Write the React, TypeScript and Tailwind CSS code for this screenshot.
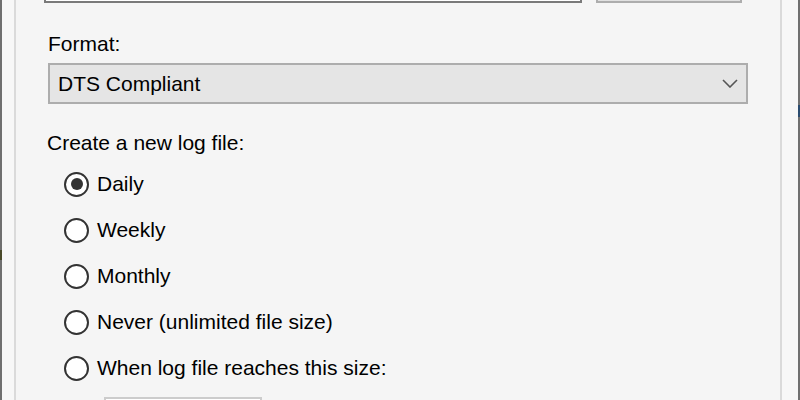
import React from "react";

const options = [
  "Daily",
  "Weekly",
  "Monthly",
  "Never (unlimited file size)",
  "When log file reaches this size:",
];

const Radio: React.FC<{ label: string; checked?: boolean }> = ({ label, checked }) => {
  return (
    <div className="flex shrink-0 items-center h-[46px] pl-[48px]">
      <span className="flex shrink-0 items-center justify-center w-[25px] h-[25px] rounded-full border-2 border-[#333333] bg-white">
        {checked && <span className="w-[12px] h-[12px] rounded-full bg-[#333333]" />}
      </span>
      <span className="ml-[8px]">{label}</span>
    </div>
  );
};

export default function App() {
  return (
    <div
      className="flex w-[800px] h-[400px] overflow-hidden bg-[#f7f7f7] text-black text-[21px] leading-[24px]"
      style={{ fontFamily: '"Liberation Sans", Arial, sans-serif' }}
    >
      {/* left window edge */}
      <div className="flex flex-col w-[2px] h-full bg-[#707070]">
        <div className="h-[250px]" />
        <div className="h-[10px] bg-[#4a4a2a]" />
      </div>
      <div className="w-[12px] h-full bg-[#f7f7f7]" />
      <div className="w-[2px] h-full bg-[#dadada]" />

      {/* dialog content */}
      <div className="flex-1 flex flex-col bg-[#f5f5f5]">
        <div className="flex shrink-0 h-[3px]">
          <div className="ml-[28px] w-[538px] h-[3px] border-x-2 border-b-2 border-[#7a7a7a] bg-white" />
          <div className="ml-[14px] w-[146px] h-[3px] border-x-2 border-b-2 border-[#adadad] bg-[#e1e1e1]" />
        </div>

        <div className="shrink-0 mt-[29px] pl-[32px]">Format:</div>

        <div className="shrink-0 mt-[7px] ml-[32px] w-[700px] h-[41px] flex items-center justify-between border-2 border-[#adadad] bg-[#e5e5e5] pl-[8px] pr-[8px]">
          <span>DTS Compliant</span>
          <svg width="16" height="9" viewBox="0 0 16 9" fill="none">
            <path d="M1 1 L8 8 L15 1" stroke="#555555" strokeWidth="1.6" />
          </svg>
        </div>

        <div className="shrink-0 mt-[27px] pl-[31px]">Create a new log file:</div>

        <div className="shrink-0 mt-[6px] flex flex-col">
          {options.map((o, i) => (
            <Radio key={o} label={o} checked={i === 0} />
          ))}
        </div>

        <div className="shrink-0 mt-[6px] ml-[88px] w-[158px] h-[20px] border-2 border-[#cccccc] bg-white" />
      </div>

      {/* right window edge */}
      <div className="w-[2px] h-full bg-[#dadada]" />
      <div className="w-[16px] h-full bg-[#f7f7f7]" />
      <div className="flex flex-col w-[2px] h-full bg-[#707070]">
        <div className="h-[105px]" />
        <div className="h-[12px] bg-[#2b4c6f]" />
      </div>
    </div>
  );
}
